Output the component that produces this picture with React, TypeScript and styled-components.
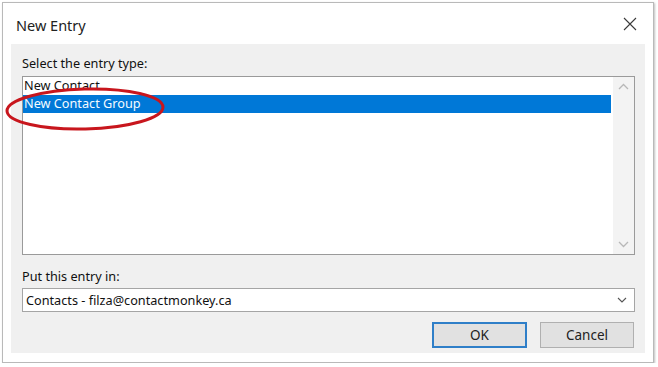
import React from "react";
import styled, { createGlobalStyle } from "styled-components";

const Global = createGlobalStyle`
  html, body { margin: 0; padding: 0; background: #ffffff; }
  body { font-family: "Segoe UI", "Noto Sans", "Open Sans", sans-serif; }
`;

const Window = styled.div`
  margin: 2px 0 0 2px;
  width: 650px;
  height: 359px;
  border: 1px solid #b9b9b9;
  background: #ffffff;
  box-shadow: 1px 1px 2px rgba(0,0,0,0.25);
  display: flex;
  flex-direction: column;
  box-sizing: content-box;
`;

const TitleBar = styled.div`
  height: 41px;
  display: flex;
  align-items: center;
  justify-content: space-between;
  padding: 0 16px 0 13px;
`;

const Title = styled.div`
  font-family: "Noto Sans", sans-serif;
  font-size: 14.5px;
  color: #222;
  padding-top: 2px;
`;

const CloseBtn = styled.div`
  width: 14px;
  height: 14px;
  display: flex;
  align-items: center;
  justify-content: center;
`;

const Panel = styled.div`
  margin: 0 8px 9px 8px;
  flex: 1;
  background: #f0f0f0;
  padding: 9px 10px 0 11px;
  display: flex;
  flex-direction: column;
  font-family: "Noto Sans", sans-serif;
  font-size: 12.7px;
  color: #111;
`;

const Label = styled.div<{ $mt?: number }>`
  margin-top: ${p => p.$mt ?? 0}px;
  height: 20px;
  line-height: 20px;
`;

const ListBox = styled.div`
  margin-top: 3px;
  height: 177px;
  border: 1px solid #9a9a9a;
  background: #fff;
  display: flex;
  position: relative;
`;

const Items = styled.div`
  flex: 1;
  display: flex;
  flex-direction: column;
`;

const Item = styled.div<{ $selected?: boolean }>`
  height: 18px;
  line-height: 17px;
  padding-left: 1px;
  background: ${p => (p.$selected ? "#0078d7" : "transparent")};
  color: ${p => (p.$selected ? "#f4fbff" : "#111")};
  margin-right: 2px;
`;

const ScrollBar = styled.div`
  width: 21px;
  background: #f3f3f3;
  display: flex;
  flex-direction: column;
  justify-content: space-between;
  align-items: center;
  padding: 6px 0 6px;
`;

const Ellipse = styled.svg`
  position: absolute;
  left: -18px;
  top: 9px;
  overflow: visible;
  pointer-events: none;
`;

const Combo = styled.div`
  margin-top: 2px;
  height: 22px;
  border: 1px solid #a5a5a5;
  background: #fff;
  display: flex;
  align-items: center;
  justify-content: space-between;
  padding: 0 7px 0 3px;
`;

const Buttons = styled.div`
  margin-top: 10px;
  display: flex;
  justify-content: flex-end;
  gap: 13px;
  padding-right: 1px;
`;

const Button = styled.div<{ $default?: boolean }>`
  width: ${p => (p.$default ? 91 : 92)}px;
  height: ${p => (p.$default ? 22 : 24)}px;
  border: ${p => (p.$default ? "2px solid #2f7fc8" : "1px solid #b0b0b0")};
  background: #e1e1e1;
  display: flex;
  align-items: center;
  justify-content: center;
  font-size: 13.5px;
  color: #222;
`;

const Chevron = ({ up }: { up?: boolean }) => (
  <svg width="11" height="7" viewBox="0 0 11 7">
    <path
      d={up ? "M1 6 L5.5 1.5 L10 6" : "M1 1 L5.5 5.5 L10 1"}
      fill="none"
      stroke="#b8b8b8"
      strokeWidth="1.3"
    />
  </svg>
);

export default function App() {
  return (
    <>
      <Global />
      <Window>
        <TitleBar>
          <Title>New Entry</Title>
          <CloseBtn>
            <svg width="14" height="14" viewBox="0 0 14 14">
              <path d="M1 1 L13 13 M13 1 L1 13" stroke="#3a3a3a" strokeWidth="1.1" fill="none" />
            </svg>
          </CloseBtn>
        </TitleBar>
        <Panel>
          <Label>Select the entry type:</Label>
          <ListBox>
            <Items>
              <Item>New Contact</Item>
              <Item $selected>New Contact Group</Item>
            </Items>
            <ScrollBar>
              <Chevron up />
              <Chevron />
            </ScrollBar>
            <Ellipse width="160" height="44" viewBox="0 0 160 44">
              <ellipse
                cx="80"
                cy="23"
                rx="78"
                ry="20"
                fill="none"
                stroke="#c8161d"
                strokeWidth="3"
                transform="rotate(-1.5 80 23)"
              />
            </Ellipse>
          </ListBox>
          <Label $mt={11}>Put this entry in:</Label>
          <Combo>
            <span>Contacts - filza@contactmonkey.ca</span>
            <svg width="10" height="6" viewBox="0 0 10 6">
              <path d="M1 1 L5 5 L9 1" fill="none" stroke="#555" strokeWidth="1.1" />
            </svg>
          </Combo>
          <Buttons>
            <Button $default>OK</Button>
            <Button>Cancel</Button>
          </Buttons>
        </Panel>
      </Window>
    </>
  );
}
